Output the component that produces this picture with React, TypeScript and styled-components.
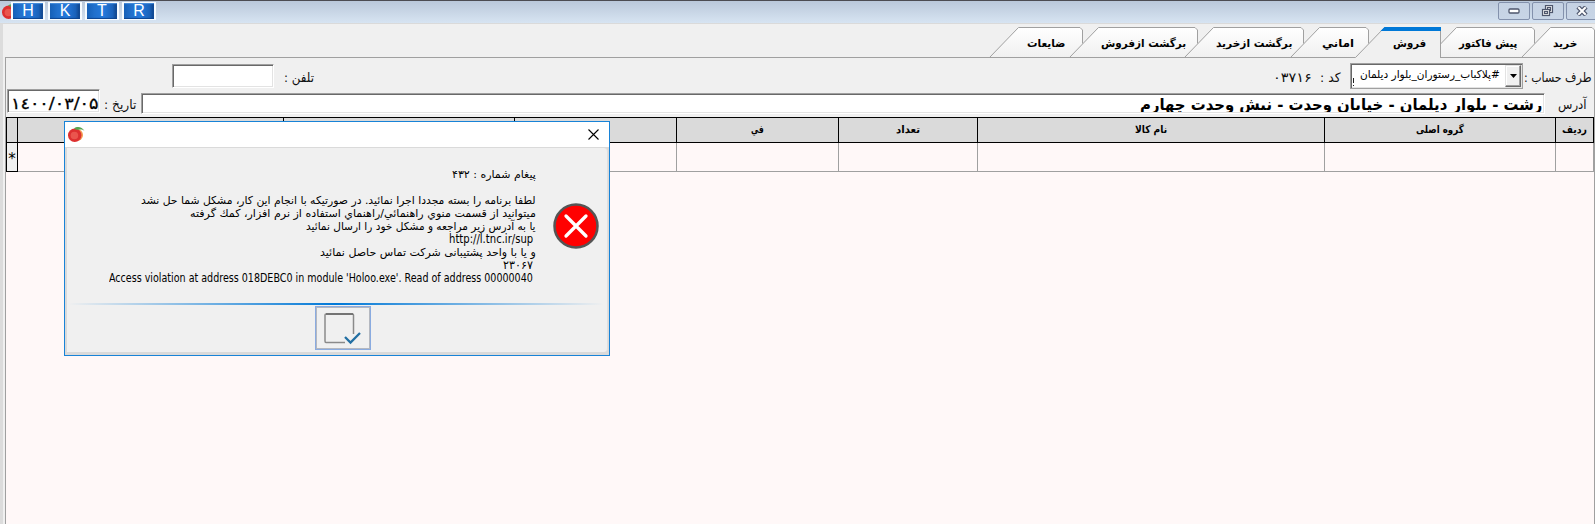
import React, { useLayoutEffect, useRef, useState } from 'react';
import styled, { createGlobalStyle } from 'styled-components';

const Global = createGlobalStyle`
  * { box-sizing: border-box; }
  body { margin: 0; background: #f0f0f0; overflow: hidden; font-family: "DejaVu Sans", sans-serif; }
`;

const Slot = styled.span<{ $w: number }>`
  display: inline-flex;
  flex: none;
  width: ${(p) => p.$w}px;
  justify-content: flex-start;
  direction: ltr;
  white-space: pre;
`;
const Glyphs = styled.span<{ $dir: string }>`
  flex: none;
  display: inline-block;
  transform-origin: 0 50%;
  direction: ${(p) => p.$dir};
`;

/* Text condensed or widened to occupy a fixed label width */
function Fit({ w, children, dir = 'rtl' }: { w: number; children: string; dir?: string }) {
  const ref = useRef<HTMLSpanElement>(null);
  const [k, setK] = useState(1);
  useLayoutEffect(() => {
    if (ref.current) setK(w / ref.current.offsetWidth);
  }, [w, children]);
  return (
    <Slot $w={w}>
      <Glyphs ref={ref} $dir={dir} style={{ transform: `scaleX(${k})` }}>{children}</Glyphs>
    </Slot>
  );
}

const Screen = styled.div`
  position: relative;
  width: 1595px;
  height: 524px;
  overflow: hidden;
  display: flex;
  flex-direction: column;
  background: #f0f0f0;
  color: #000;
`;
const TitleBar = styled.header`
  flex: none;
  height: 24px;
  border-top: 1px solid #4c4c52;
  border-bottom: 1px solid #dadada;
  background: linear-gradient(#bac8da, #d7e4f2);
  display: flex;
  justify-content: space-between;
`;
const Launchers = styled.div`
  display: flex;
  align-items: flex-start;
  padding: 1px 0 0 2px;
`;
const AppMark = styled.div`
  width: 9px;
  height: 19px;
  overflow: hidden;
  padding-top: 1px;
`;
const Launcher = styled.div`
  width: 34px;
  height: 18px;
  margin-right: 3px;
  border: 1px solid #f6fbff;
  border-width: 1px 2px 1px 2px;
  background: linear-gradient(90deg, #1560b8, #2170cc 25%, #2479dc 55%, #1a62ba 85%, #0d4288);
  box-shadow: inset 0 -1px 1px #0d4490, inset 0 1px 1px #4a8fdd;
  color: #fff;
  font: 16px/16px "Liberation Sans", sans-serif;
  text-align: center;
`;
const WindowKeys = styled.div`
  display: flex;
  gap: 2px;
  padding-top: 1px;
  margin-right: -3px;
`;
const WindowKey = styled.div`
  width: 32px;
  height: 18px;
  border: 1px solid #8391ac;
  border-radius: 2px;
  background: linear-gradient(#c5d2e3, #c8d5e6);
  display: flex;
  align-items: center;
  justify-content: center;
  padding-right: 1px;
`;
const Body = styled.main`
  flex: 1;
  display: flex;
  flex-direction: column;
  border-left: 3px solid #dcdcdc;
  padding-left: 2px;
`;
const Tabs = styled.nav`
  direction: rtl;
  display: flex;
  height: 34px;
  padding-top: 3px;
  margin-bottom: -1px;
  position: relative;
  z-index: 1;
`;
const TabBox = styled.div<{ $w: number; $z: number }>`
  position: relative;
  z-index: ${(p) => p.$z};
  flex: none;
  width: ${(p) => p.$w}px;
  height: 31px;
  margin-left: -14px;
  display: grid;
  direction: ltr;
  > * { grid-area: 1 / 1; }
`;
const TabText = styled.div<{ $x: number }>`
  position: relative;
  padding-left: ${(p) => p.$x}px;
  font: bold 11px/33px "DejaVu Sans", sans-serif;
`;
const Panel = styled.section`
  flex: 1;
  border: 1px solid #a0a0a0;
  border-bottom: 0;
  display: flex;
  flex-direction: column;
`;
const Form = styled.div`
  height: 59px;
  display: flex;
  flex-direction: column;
`;
const FormRow = styled.div<{ $h: number }>`
  height: ${(p) => p.$h}px;
  display: flex;
  align-items: flex-start;
`;
const Label = styled.div<{ $l: number; $t: number }>`
  margin: ${(p) => p.$t}px 0 0 ${(p) => p.$l}px;
  font: 13px/18px "DejaVu Sans", sans-serif;
  display: flex;
  color: #111;
`;
const Field = styled.div<{ $w: number; $h: number; $l: number; $t: number }>`
  width: ${(p) => p.$w}px;
  height: ${(p) => p.$h}px;
  margin: ${(p) => p.$t}px 0 0 ${(p) => p.$l}px;
  flex: none;
  background: #fff;
  border: 1px solid;
  border-color: #a0a0a0 #fff #fff #a0a0a0;
  box-shadow: inset 1px 1px #696969, inset -1px -1px #e3e3e3;
  display: flex;
  overflow: hidden;
`;
const DateText = styled.div`
  padding: 2px 0 0 3px;
  font: 16px/23px "DejaVu Sans", sans-serif;
  -webkit-text-stroke: 0.3px #000;
`;
const AddressText = styled.div`
  margin-left: auto;
  padding-right: 2px;
  height: 18px;
  overflow: hidden;
  font: bold 16px/22px "DejaVu Sans", sans-serif;
`;
const Combo = styled(Field)`
  font: 11px/19px "DejaVu Sans", sans-serif;
  justify-content: flex-end;
  padding: 1px;
  border-color: #a0a0a0;
`;
const ComboText = styled.div`
  margin-right: 5px;
`;
const ComboCaret = styled.div`
  width: 1px;
  height: 8px;
  margin: 13px auto 0 1px;
  border-top: 5px solid #222;
  border-bottom: 1px solid #222;
`;
const ComboKey = styled.div`
  width: 16px;
  background: #f0f0f0;
  border: 1px solid;
  border-color: #e3e3e3 #696969 #696969 #e3e3e3;
  box-shadow: inset -1px -1px #a0a0a0, inset 1px 1px #fff;
  display: flex;
  align-items: center;
  justify-content: center;
`;
const Grid = styled.div`
  flex: 1;
  background: #fff8f8;
`;
const columns = '11px 266px 231px 162px 162px 139px 347px 231px 38px';
const HeadRow = styled.div`
  display: grid;
  grid-template-columns: ${columns};
  height: 26px;
  width: 1588px;
  border: 1px solid #000;
  border-right: 0;
  background: #dadada;
`;
const HeadCell = styled.div`
  border-right: 1px solid #000;
  display: flex;
  justify-content: center;
  font: bold 10.5px/23px "DejaVu Sans", sans-serif;
`;
const DataRow = styled.div`
  display: grid;
  grid-template-columns: ${columns};
  grid-template-rows: 29px;
  height: 29px;
  width: 1588px;
  border-left: 1px solid #000;
`;
const DataCell = styled.div<{ $mark?: boolean }>`
  border-right: 1px solid ${(p) => (p.$mark ? '#000' : '#a0a0a0')};
  border-bottom: 1px solid ${(p) => (p.$mark ? '#000' : '#a0a0a0')};
  background: ${(p) => (p.$mark ? '#f0f0f0' : 'transparent')};
  display: flex;
  justify-content: center;
  font: 15px/33px "DejaVu Sans", sans-serif;
`;
const Dialog = styled.div`
  position: absolute;
  z-index: 5;
  left: 64px;
  top: 121px;
  width: 546px;
  height: 235px;
  border: 1px solid #1883d7;
  background: #dadada;
  display: flex;
  flex-direction: column;
`;
const DialogTitle = styled.div`
  height: 25px;
  flex: none;
  background: #fff;
  display: flex;
  justify-content: space-between;
  padding: 4px 10px 0 3px;
`;
const DialogBody = styled.div`
  flex: 1;
  margin: 1px 1px 3px 2px;
  background: #f0f0f0;
  border-right: 1px solid #e0e0e0;
  border-radius: 0 4px 4px 0;
  display: flex;
  flex-direction: column;
`;
const Message = styled.div`
  display: flex;
  height: 155px;
`;
const Lines = styled.div`
  width: 469px;
  padding-top: 20px;
  display: flex;
  flex-direction: column;
  align-items: flex-end;
`;
const Line = styled.div<{ $r?: number; $latin?: boolean }>`
  height: 13px;
  margin-right: ${(p) => p.$r ?? 0}px;
  font: ${(p) => (p.$latin ? 11.5 : 11)}px/13px "DejaVu Sans", sans-serif;
`;
const ErrorMark = styled.div`
  padding: 55px 0 0 17px;
`;
const Rule = styled.div`
  height: 2px;
  width: 536px;
  margin-left: 1px;
  background: linear-gradient(90deg, #0078d700, #0078d7 50%, #0078d700);
`;
const OkButton = styled.div`
  width: 56px;
  height: 44px;
  margin: 1px 0 0 248px;
  border: 1px solid #8aabe0;
  box-shadow: inset 0 0 0 1px #b4b8c0;
  display: flex;
  padding: 6px 0 0 8px;
`;

const Tomato = () => (
  <svg width="17" height="17" viewBox="0 0 17 17">
    <circle cx="9" cy="9" r="6" fill="#f29a50" />
    <circle cx="6.7" cy="9.3" r="6.7" fill="#dd3030" />
    <circle cx="6.4" cy="9.5" r="3.8" fill="#ed5f55" opacity=".8" />
    <path d="M6 2.5C9 .2 14 .5 16.500 5c-2-1.700-4-1.600-6-1.200C8.500 4 7.500 3.500 6 2.500Z" fill="#58a450" />
  </svg>
);

type TabDef = { text: string; w: number; x: number; tw: number; active?: boolean };
const tabs: TabDef[] = [
  { text: 'خرید', w: 74, x: 32, tw: 24 },
  { text: 'پیش فاکتور', w: 108, x: 32, tw: 58 },
  { text: 'فروش', w: 86, x: 38, tw: 33, active: true },
  { text: 'اماني', w: 79, x: 32, tw: 32 },
  { text: 'برگشت ازخرید', w: 120, x: 32, tw: 76 },
  { text: 'برگشت ازفروش', w: 129, x: 32, tw: 85 },
  { text: 'ضایعات', w: 94, x: 38, tw: 38 },
];

const Tab = ({ tab, z, last }: { tab: TabDef; z: number; last: boolean }) => {
  const { w, active } = tab;
  return (
    <TabBox $w={w} $z={z}>
      <svg width={w} height="31">
        <defs>
          <linearGradient id="tabface" x1="0" y1="0" x2="0" y2="1">
            <stop offset="0" stopColor="#fff" />
            <stop offset="1" stopColor="#f0f0f0" />
          </linearGradient>
        </defs>
        <path
          d={active ? `M0 31L.5 30.500L29.500 .5H${w - 0.5}V31Z` : `M.5 30.500L29.500 .5H${w - 3}L${w - 0.5} 3V30.500Z`}
          fill={active ? '#f0f0f0' : 'url(#tabface)'}
        />
        <path
          d={active ? `M.5 30.500L29.500 .5H${w - 0.5}V31` : `M.5 30.500L29.500 .5H${w - 3}L${w - 0.5} 3V${last ? 31 : 16.5}`}
          fill="none"
          stroke="#a0a0a0"
        />
        {!active && <path d={`M0 30.500H${w}`} stroke="#a0a0a0" />}
        {active && <path d={`M29.500 0H${w}V4H25.500Z`} fill="#0078d7" />}
      </svg>
      <TabText $x={tab.x}><Fit w={tab.tw}>{tab.text}</Fit></TabText>
    </TabBox>
  );
};

const headings: [string, number][] = [
  ['', 0], ['', 0], ['', 0], ['', 0], ['في', 13], ['تعداد', 24], ['نام کالا', 32], ['گروه اصلی', 48], ['ردیف', 25],
];

export default function App() {
  return (
    <Screen>
      <Global />
      <TitleBar>
        <Launchers>
          <AppMark><Tomato /></AppMark>
          {['H', 'K', 'T', 'R'].map((c) => <Launcher key={c}>{c}</Launcher>)}
        </Launchers>
        <WindowKeys>
          <WindowKey>
            <svg width="12" height="6"><rect x="1" y="1" width="10" height="4" rx="1" fill="#fff" stroke="#4e566c" strokeWidth="1.300" /></svg>
          </WindowKey>
          <WindowKey>
            <svg width="13" height="12" fill="#f4f4f4" stroke="#4e566c" strokeWidth="1.200">
              <rect x="4.500" y=".5" width="7" height="7" /><rect x="6.500" y="2.500" width="3" height="3" />
              <rect x="1.500" y="4.500" width="7" height="6" /><rect x="3.500" y="6.500" width="3" height="2" />
            </svg>
          </WindowKey>
          <WindowKey>
            <svg width="12" height="10" viewBox="0 0 12 10">
              <path d="M2 1L10 9M10 1L2 9" stroke="#4e566c" strokeWidth="4.500" />
              <path d="M2.300 1.300L9.700 8.700M9.700 1.300L2.300 8.700" stroke="#fff" strokeWidth="2" />
            </svg>
          </WindowKey>
        </WindowKeys>
      </TitleBar>
      <Body>
        <Tabs>
          {tabs.map((t, i) => <Tab key={t.text} tab={t} last={i === 0} z={t.active ? 20 : 10 - i} />)}
        </Tabs>
        <Panel>
          <Form>
            <FormRow $h={31}>
              <Field $w={102} $h={24} $l={166} $t={6} />
              <Label $l={10} $t={11}><Fit w={30}>تلفن :</Fit></Label>
              <Label $l={959} $t={11}><Fit w={39}>۰۳۷۱۶</Fit></Label>
              <Label $l={8} $t={11}><Fit w={21}>کد :</Fit></Label>
              <Combo $w={173} $h={26} $l={9} $t={5}>
                <ComboCaret />
                <ComboText><Fit w={140}>#پلاکباب_رستوران_بلوار دیلمان</Fit></ComboText>
                <ComboKey><svg width="7" height="4"><path d="M0 0H7L3.500 4Z" /></svg></ComboKey>
              </Combo>
              <Label $l={1} $t={11}><Fit w={67}>طرف حساب :</Fit></Label>
            </FormRow>
            <FormRow $h={28}>
              <Field $w={93} $h={24} $l={1} $t={0}><DateText><Fit w={88} dir="ltr">۱٤۰۰/۰۳/۰۵</Fit></DateText></Field>
              <Label $l={4} $t={7}><Fit w={32}>تاریخ :</Fit></Label>
              <Field $w={1404} $h={21} $l={5} $t={4}>
                <AddressText><Fit w={402}>رشت - بلوار دیلمان - خیابان وحدت - نبش وحدت چهارم</Fit></AddressText>
              </Field>
              <Label $l={13} $t={7}><Fit w={29}>آدرس</Fit></Label>
            </FormRow>
          </Form>
          <Grid>
            <HeadRow>
              {headings.map(([t, w], i) => <HeadCell key={i}>{t && <Fit w={w}>{t}</Fit>}</HeadCell>)}
            </HeadRow>
            <DataRow>
              {headings.map((_, i) => <DataCell key={i} $mark={i === 0}>{i === 0 ? '*' : ''}</DataCell>)}
            </DataRow>
          </Grid>
        </Panel>
      </Body>
      <Dialog>
        <DialogTitle>
          <Tomato />
          <svg width="11" height="19"><path d="M.5 3.500L10.500 13.500M10.500 3.500L.5 13.500" stroke="#000" strokeWidth="1.100" /></svg>
        </DialogTitle>
        <DialogBody>
          <Message>
            <Lines>
              <Line><Fit w={84}>پیغام شماره : ۴۳۲</Fit></Line>
              <Line />
              <Line><Fit w={395}>لطفا برنامه را بسته مجددا اجرا نمائید. در صورتیکه با انجام این کار، مشکل شما حل نشد</Fit></Line>
              <Line><Fit w={346}>میتوانید از قسمت منوي راهنمائي/راهنماي استفاده از نرم افزار، كمك گرفته</Fit></Line>
              <Line><Fit w={230}>یا به آدرس زیر مراجعه و مشکل خود را ارسال نمائید</Fit></Line>
              <Line $r={3} $latin><Fit w={84} dir="ltr">http://l.tnc.ir/sup</Fit></Line>
              <Line><Fit w={216}>و یا با واحد پشتیبانی شرکت تماس حاصل نمائید</Fit></Line>
              <Line $r={3} $latin><Fit w={30} dir="ltr">۲۳۰۶۷</Fit></Line>
              <Line $r={3} $latin><Fit w={424} dir="ltr">Access violation at address 018DEBC0 in module 'Holoo.exe'. Read of address 00000040</Fit></Line>
            </Lines>
            <ErrorMark>
              <svg width="47" height="47"><circle cx="23" cy="23" r="21.500" fill="#f00" stroke="#555" strokeWidth="2.500" /><path d="M13 13L33 33M33 13L13 33" stroke="#fff" strokeWidth="3.300" strokeLinecap="round" /></svg>
            </ErrorMark>
          </Message>
          <Rule />
          <OkButton>
            <svg width="38" height="32" fill="none">
              <path d="M29.500 21V2Q29.500 1 28.500 1H2Q1 1 1 2V28Q1 29.500 2 29.500H21" stroke="#8a8a8a" strokeWidth="1.500" />
              <path d="M2 1H29" stroke="#555" strokeWidth="1.200" />
              <path d="M21 24L26.500 29.500L36 20" stroke="#226fa3" strokeWidth="2.300" />
            </svg>
          </OkButton>
        </DialogBody>
      </Dialog>
    </Screen>
  );
}
